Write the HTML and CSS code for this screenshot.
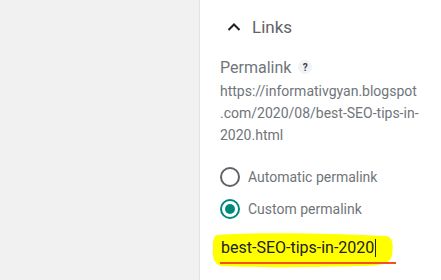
FILE: index.html
```html
<!DOCTYPE html>
<html>
<head>
<meta charset="utf-8">
<link rel="stylesheet" href="styles.css">
</head>
<body>
<div class="page">
  <div class="sidebar"></div>
  <div class="panel">
    <div class="section-head">
      <svg class="chevron" width="14" height="10" viewBox="0 0 14 10"><path d="M1.5 8 L7 2.5 L12.5 8" fill="none" stroke="#202124" stroke-width="2"/></svg>
      <span class="section-title">Links</span>
    </div>
    <div class="label-row">
      <span class="label">Permalink</span>
      <span class="help">?</span>
    </div>
    <div class="url">https://informativgyan.blogspot<br>.com/2020/08/best-SEO-tips-in-<br>2020.html</div>
    <div class="options">
      <div class="option">
        <span class="radio"></span>
        <span class="option-text">Automatic permalink</span>
      </div>
      <div class="option">
        <span class="radio checked"><span class="dot"></span></span>
        <span class="option-text">Custom permalink</span>
      </div>
    </div>
    <div class="input-wrap">
      <svg class="highlight" width="186" height="38" viewBox="0 0 186 38"><path d="M6 4 C40 1 120 2 176 5 C183 8 182 16 181 24 C180 32 172 35 150 35 C110 36 50 37 10 35 C3 33 1 26 2 18 C2 10 2 6 6 4 Z" fill="#ffff00"/></svg>
      <div class="input"><span class="value">best-SEO-tips-in-2020</span><span class="caret"></span></div>
      <div class="underline"></div>
    </div>
  </div>
</div>
</body>
</html>
```
FILE: styles.css
```css
html, body {
  margin: 0;
  padding: 0;
  background: #ffffff;
}
.page {
  display: flex;
  width: 441px;
  height: 280px;
  overflow: hidden;
  font-family: Roboto, "Noto Sans", sans-serif;
}
.sidebar {
  width: 199px;
  flex: none;
  background: #f1f1f1;
  border-right: 1px solid #e3e3e3;
}
.panel {
  flex: 1;
  padding-left: 20px;
  display: flex;
  flex-direction: column;
}
.section-head {
  display: flex;
  align-items: center;
  height: 24px;
  margin-top: 15px;
  padding-left: 7px;
}
.chevron {
  display: block;
}
.section-title {
  margin-left: 11px;
  font-size: 17px;
  color: #5f6368;
}
.label-row {
  display: flex;
  align-items: center;
  margin-top: 16px;
  height: 24px;
}
.label {
  font-size: 16px;
  color: #70757a;
}
.help {
  margin-left: 7px;
  width: 14px;
  height: 14px;
  border-radius: 50%;
  background: #f1f3f4;
  color: #3c4043;
  font-size: 10px;
  font-weight: 700;
  display: flex;
  align-items: center;
  justify-content: center;
}
.url {
  margin-top: 1px;
  font-size: 14px;
  line-height: 22px;
  color: #70757a;
}
.options {
  display: flex;
  flex-direction: column;
  gap: 12px;
  margin-top: 21px;
}
.option {
  display: flex;
  align-items: center;
  height: 20px;
}
.radio {
  width: 16px;
  height: 16px;
  border: 2px solid #5f6368;
  border-radius: 50%;
  display: flex;
  align-items: center;
  justify-content: center;
  flex: none;
}
.radio.checked {
  border-color: #00897b;
}
.dot {
  width: 10px;
  height: 10px;
  border-radius: 50%;
  background: #00897b;
}
.option-text {
  margin-left: 8px;
  font-size: 14px;
  color: #70757a;
}
.input-wrap {
  position: relative;
  margin-top: 14px;
  width: 176px;
}
.highlight {
  position: absolute;
  left: -9px;
  top: -2px;
}
.input {
  position: relative;
  display: flex;
  align-items: center;
  height: 29px;
  padding-left: 1px;
  font-size: 16px;
  color: #202124;
}
.caret {
  width: 1px;
  height: 18px;
  background: #202124;
  margin-left: 1px;
}
.underline {
  position: relative;
  height: 2px;
  background: #f4511e;
}
```
